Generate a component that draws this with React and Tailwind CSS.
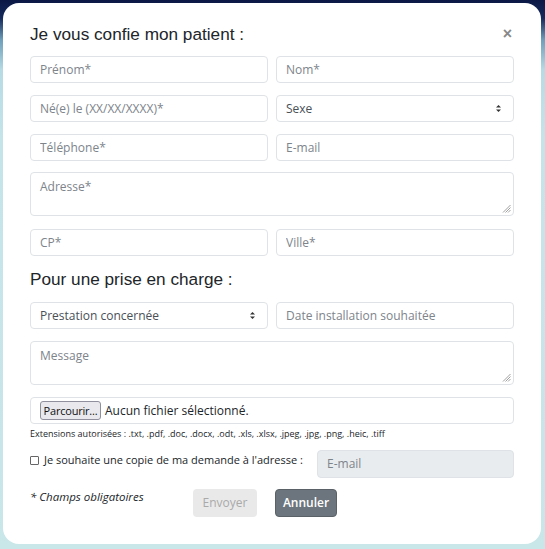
import React from "react";

const inputCls =
  "h-[27px] w-full rounded-[4px] border border-[#dfe2e6] bg-white px-[9px] text-[12px] text-[#495057] placeholder:text-[#7d848b] outline-none";

function SelectArrows() {
  return (
    <svg width="7" height="9" viewBox="0 0 7 9" className="shrink-0">
      <path d="M3.5 1 L6 3.5 L1 3.5 Z" fill="#333" />
      <path d="M3.5 8 L6 5.5 L1 5.5 Z" fill="#333" />
    </svg>
  );
}

function FakeSelect({ label }) {
  return (
    <div className="flex h-[27px] w-full items-center justify-between rounded-[4px] border border-[#dfe2e6] bg-white pl-[9px] pr-[11px] text-[12px] text-[#495057]">
      <span>{label}</span>
      <SelectArrows />
    </div>
  );
}

function Grip() {
  return (
    <svg width="9" height="9" viewBox="0 0 9 9" className="absolute bottom-[2px] right-[2px]">
      <path d="M8.5 1 L1 8.5 M8.5 3.5 L3.5 8.5 M8.5 6 L6 8.5" stroke="#888" strokeWidth="0.8" />
    </svg>
  );
}

function FakeTextarea({ label }) {
  return (
    <div className="relative h-[44px] w-full rounded-[4px] border border-[#dfe2e6] bg-white px-[9px] pt-[5px] text-[12px] text-[#7d848b]">
      {label}
      <Grip />
    </div>
  );
}

export default function App() {
  return (
    <div
      className="h-[549px] w-[545px] overflow-hidden bg-[linear-gradient(to_bottom,#0b1846_0px,#14295a_18px,#6f9fba_40px,#b7dbe4_70px,#c5e4ea_140px,#c9e6e9_100%)] pl-[3px] pr-[4px] pt-[3px] pb-[5px]"
      style={{ fontFamily: '"Open Sans", "Noto Sans", sans-serif' }}
    >
      <div className="flex h-full flex-col rounded-[16px] bg-white pl-[27px] pr-[27px] pt-[18px]">
        <div className="flex h-[26px] items-center justify-between">
          <h1
            className="text-[17.2px] leading-[26px] text-[#212529]"
            style={{ fontFamily: '"Liberation Sans", Arial, sans-serif' }}
          >
            Je vous confie mon patient :
          </h1>
          <span
            className="mr-[2px] text-[16px] font-bold leading-none text-[#888]"
            style={{ fontFamily: '"Liberation Sans", Arial, sans-serif' }}
          >
            ×
          </span>
        </div>

        <div className="mt-[9px] grid grid-cols-2 gap-x-[8px] gap-y-[12px]">
          <input className={inputCls} placeholder="Prénom*" />
          <input className={inputCls} placeholder="Nom*" />
          <input className={inputCls} placeholder="Né(e) le (XX/XX/XXXX)*" />
          <FakeSelect label="Sexe" />
          <input className={inputCls} placeholder="Téléphone*" />
          <input className={inputCls} placeholder="E-mail" />
          <div className="col-span-2 -mt-[1px]">
            <FakeTextarea label="Adresse*" />
          </div>
          <input className={`${inputCls} mt-[1px]`} placeholder="CP*" />
          <input className={`${inputCls} mt-[1px]`} placeholder="Ville*" />
        </div>

        <h2
          className="mt-[11px] text-[17.2px] leading-[24px] text-[#212529]"
          style={{ fontFamily: '"Liberation Sans", Arial, sans-serif' }}
        >
          Pour une prise en charge :
        </h2>

        <div className="mt-[11px] grid grid-cols-2 gap-x-[8px] gap-y-[12px]">
          <FakeSelect label="Prestation concernée" />
          <input className={inputCls} placeholder="Date installation souhaitée" />
          <div className="col-span-2">
            <FakeTextarea label="Message" />
          </div>
          <div className="col-span-2 flex h-[27px] items-center rounded-[4px] border border-[#dfe2e6] bg-white pl-[9px] text-[12px] text-[#212529]">
            <span className="flex h-[19px] w-[61px] items-center justify-center rounded-[3px] border border-[#8f8f9d] bg-[#e9e9ed] text-[11px] leading-none tracking-[-0.2px] text-[#111]">
              Parcourir...
            </span>
            <span className="ml-[4px]">Aucun fichier sélectionné.</span>
          </div>
        </div>

        <p className="mt-[4px] text-[9px] leading-[12px] text-[#212529]">
          Extensions autorisées : .txt, .pdf, .doc, .docx, .odt, .xls, .xlsx, .jpeg, .jpg, .png, .heic, .tiff
        </p>

        <div className="mt-[10px] flex items-start">
          <div className="flex items-center pt-[3px]">
            <span className="h-[9px] w-[9px] rounded-[1px] border border-[#666] bg-white" />
            <span className="ml-[5px] text-[11px] leading-[14px] text-[#212529]">
              Je souhaite une copie de ma demande à l'adresse :
            </span>
          </div>
          <div className="ml-auto flex h-[28px] w-[197px] items-center rounded-[4px] border border-[#dfe2e6] bg-[#e9ecef] px-[9px] text-[12px] text-[#7d848b]">
            E-mail
          </div>
        </div>

        <div className="mt-[11px] flex items-start">
          <span className="mt-[1px] w-[163px] text-[11.5px] italic leading-[14px] text-[#212529]">
            * Champs obligatoires
          </span>
          <span className="flex h-[28px] w-[64px] items-center justify-center rounded-[4px] bg-[#e9e9e9] text-[12px] text-[#a9a9a9]">
            Envoyer
          </span>
          <span className="ml-[18px] flex h-[28px] w-[62px] items-center justify-center rounded-[4px] border border-[#5a6268] bg-[#6c757d] text-[12px] font-semibold text-white">
            Annuler
          </span>
        </div>
      </div>
    </div>
  );
}
